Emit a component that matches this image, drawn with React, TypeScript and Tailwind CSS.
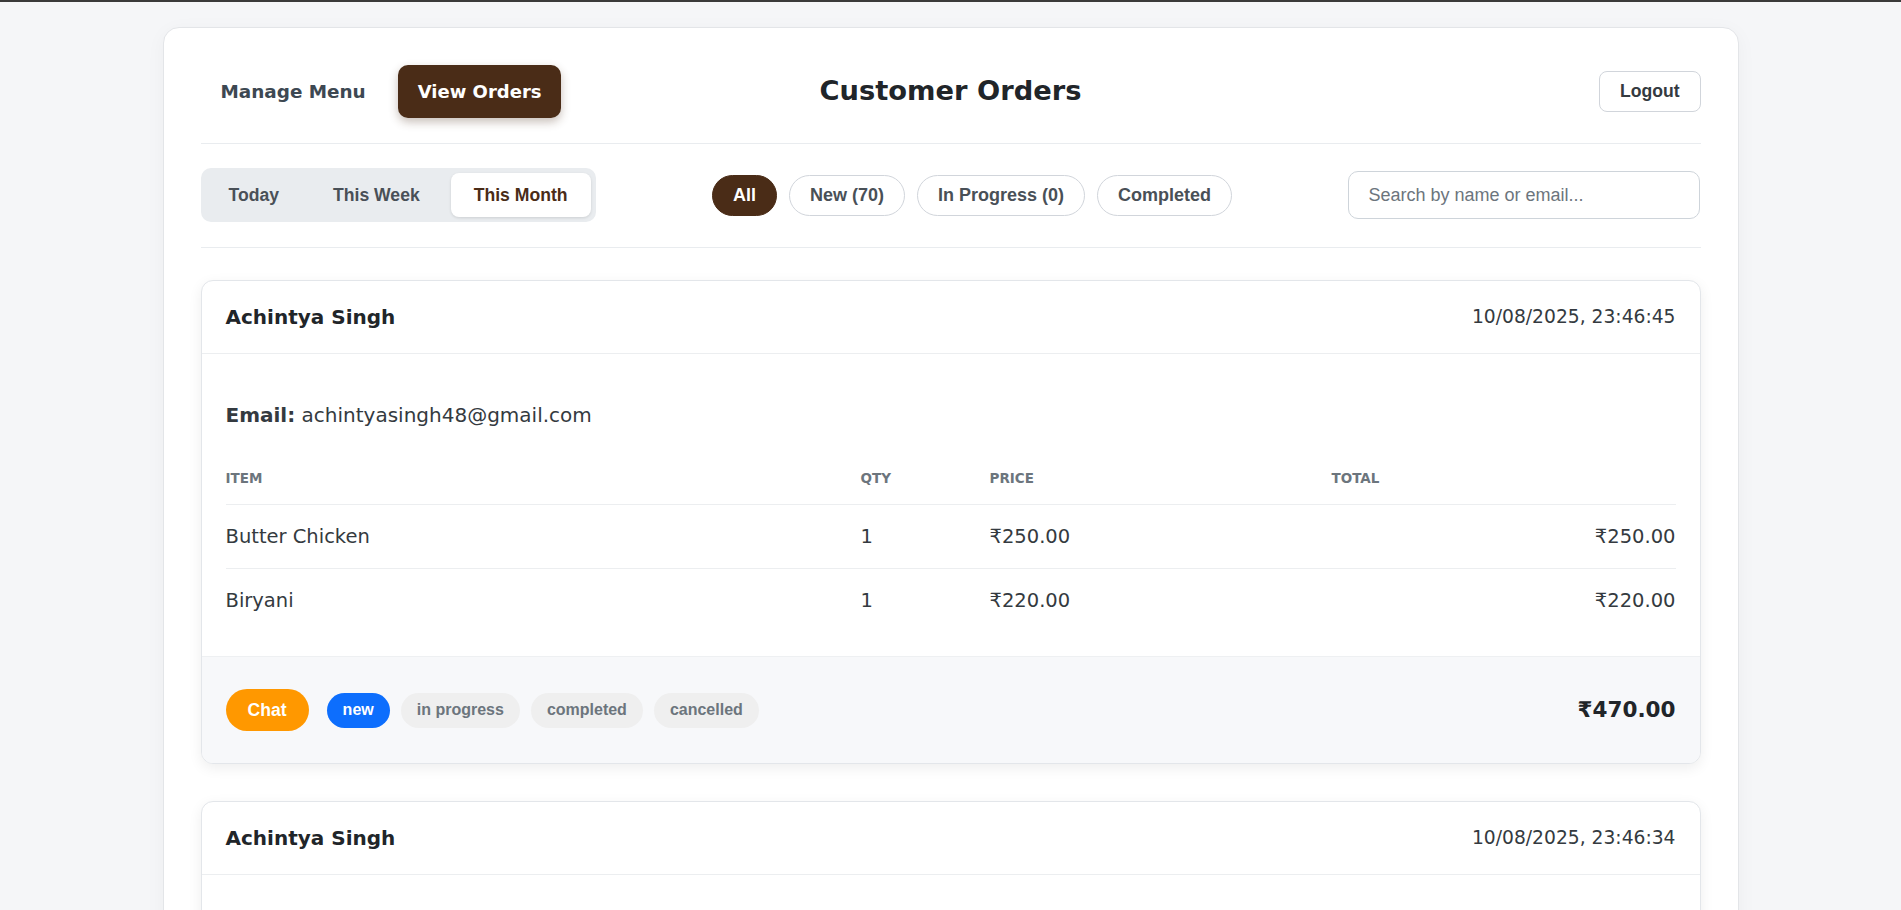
import React from "react";

type Item = { name: string; qty: number; price: number };
type Order = { name: string; email: string; date: string; items: Item[] };

const orders: Order[] = [
  {
    name: "Achintya Singh",
    email: "achintyasingh48@gmail.com",
    date: "10/08/2025, 23:46:45",
    items: [
      { name: "Butter Chicken", qty: 1, price: 250 },
      { name: "Biryani", qty: 1, price: 220 },
    ],
  },
  {
    name: "Achintya Singh",
    email: "achintyasingh48@gmail.com",
    date: "10/08/2025, 23:46:34",
    items: [
      { name: "Paneer Tikka", qty: 2, price: 180 },
      { name: "Garlic Naan", qty: 3, price: 40 },
    ],
  },
];

const rupee = (n: number) => "₹" + n.toFixed(2);

function OrderCard({ order }: { order: Order }) {
  const total = order.items.reduce((s, i) => s + i.qty * i.price, 0);
  return (
    <div className="bg-white border border-[#e3e6ea] rounded-xl overflow-hidden shadow-[0_4px_14px_rgba(0,0,0,0.07)]">
      {/* card header */}
      <div className="h-[73px] px-6 flex items-center justify-between border-b border-[#eceef0]">
        <h3 className="text-[20px] font-bold text-[#212529]">{order.name}</h3>
        <span className="text-[18.7px] text-[#343a40]">{order.date}</span>
      </div>

      {/* card body */}
      <div className="px-6 pt-[47px] pb-[23px]">
        <p className="text-[20px] leading-[28px] text-[#343a40] mb-[39px]">
          <strong className="font-bold">Email:</strong> {order.email}
        </p>

        <div className="grid grid-cols-[635px_129px_342px_1fr] text-[13.5px] leading-[20px] font-bold text-[#6c757d] uppercase pb-4 border-b border-[#eceef0]">
          <span>Item</span>
          <span>Qty</span>
          <span>Price</span>
          <span>Total</span>
        </div>
        {order.items.map((it, idx) => (
          <div
            key={it.name}
            className={
              "grid grid-cols-[635px_129px_342px_1fr] items-center h-[64px] text-[19.5px] text-[#343a40] " +
              (idx < order.items.length - 1 ? "border-b border-[#eceef0]" : "")
            }
          >
            <span>{it.name}</span>
            <span>{it.qty}</span>
            <span>{rupee(it.price)}</span>
            <span className="text-right">{rupee(it.qty * it.price)}</span>
          </div>
        ))}
      </div>

      {/* card footer */}
      <div className="bg-[#f7f8fa] border-t border-[#eef0f2] px-6 py-8 flex items-center justify-between">
        <div className="flex items-center font-['Liberation_Sans',Arial,sans-serif]">
          <button className="h-[42px] px-[22px] rounded-full bg-[#ff9800] text-white text-[17.6px] font-bold mr-[18px]">
            Chat
          </button>
          <div className="flex items-center gap-[11px]">
            <span className="h-[35px] px-4 flex items-center rounded-full bg-[#0d6efd] text-white text-[16px] font-bold">
              new
            </span>
            <span className="h-[35px] px-4 flex items-center rounded-full bg-[#efefef] text-[#6c757d] text-[16px] font-bold">
              in progress
            </span>
            <span className="h-[35px] px-4 flex items-center rounded-full bg-[#efefef] text-[#6c757d] text-[16px] font-bold">
              completed
            </span>
            <span className="h-[35px] px-4 flex items-center rounded-full bg-[#efefef] text-[#6c757d] text-[16px] font-bold">
              cancelled
            </span>
          </div>
        </div>
        <span className="text-[21.5px] font-bold text-[#212529]">{rupee(total)}</span>
      </div>
    </div>
  );
}

function App() {
  return (
    <div className="min-h-screen bg-[#f5f6f8] border-t-2 border-[#3a3a3a] pt-[25px] font-['DejaVu_Sans',sans-serif]">
      <div className="mx-auto w-[1576px] bg-white border border-[#e3e5e8] rounded-2xl shadow-[0_4px_20px_rgba(0,0,0,0.04)] px-[37px] pt-[37px] pb-10">
        {/* top header */}
        <header className="grid grid-cols-[1fr_auto_1fr] items-center pb-[25px] border-b border-[#e9ecef]">
          <nav className="flex items-center gap-3">
            <button className="px-5 py-[13px] leading-[27px] text-[18.4px] font-bold text-[#3d4852]">
              Manage Menu
            </button>
            <button className="px-5 py-[13px] leading-[27px] text-[18px] font-bold text-white bg-[#4a2c17] rounded-[10px] shadow-[0_4px_10px_rgba(74,44,23,0.3)]">
              View Orders
            </button>
          </nav>
          <h1 className="text-[27.3px] font-bold text-[#212529]">Customer Orders</h1>
          <div className="flex justify-end">
            <button className="h-[41px] px-5 border border-[#d1d5db] rounded-lg bg-white text-[17.6px] font-bold text-[#343a40] font-['Liberation_Sans',Arial,sans-serif]">
              Logout
            </button>
          </div>
        </header>

        {/* filter bar */}
        <div className="flex items-center justify-between pt-6 pb-[25px] border-b border-[#e9ecef] font-['Liberation_Sans',Arial,sans-serif]">
          <div className="flex items-center gap-2 p-[5px] bg-[#e9ecef] rounded-[10px]">
            <button className="h-[44px] px-[23px] rounded-lg text-[17.6px] font-bold text-[#495057]">Today</button>
            <button className="h-[44px] px-[23px] rounded-lg text-[17.6px] font-bold text-[#495057]">This Week</button>
            <button className="h-[44px] px-[23px] rounded-lg text-[17.6px] font-bold text-[#4a2c17] bg-white shadow-[0_1px_3px_rgba(0,0,0,0.12)]">
              This Month
            </button>
          </div>

          <div className="flex items-center gap-3">
            <button className="h-[41px] px-5 rounded-full border border-[#4a2c17] bg-[#4a2c17] text-white text-[18px] font-bold">
              All
            </button>
            <button className="h-[41px] px-5 rounded-full border border-[#d1d5db] bg-white text-[#495057] text-[18px] font-bold">
              New (70)
            </button>
            <button className="h-[41px] px-5 rounded-full border border-[#d1d5db] bg-white text-[#495057] text-[18px] font-bold">
              In Progress (0)
            </button>
            <button className="h-[41px] px-5 rounded-full border border-[#d1d5db] bg-white text-[#495057] text-[18px] font-bold">
              Completed
            </button>
          </div>

          <input
            type="text"
            placeholder="Search by name or email..."
            className="w-[352px] h-[48px] px-[19px] border border-[#ced4da] rounded-[10px] text-[18px] text-[#343a40] placeholder:text-[#6c757d] outline-none"
          />
        </div>

        {/* orders */}
        <div className="mt-8 flex flex-col gap-[37px]">
          {orders.map((o) => (
            <OrderCard key={o.date} order={o} />
          ))}
        </div>
      </div>
    </div>
  );
}

export default App;
